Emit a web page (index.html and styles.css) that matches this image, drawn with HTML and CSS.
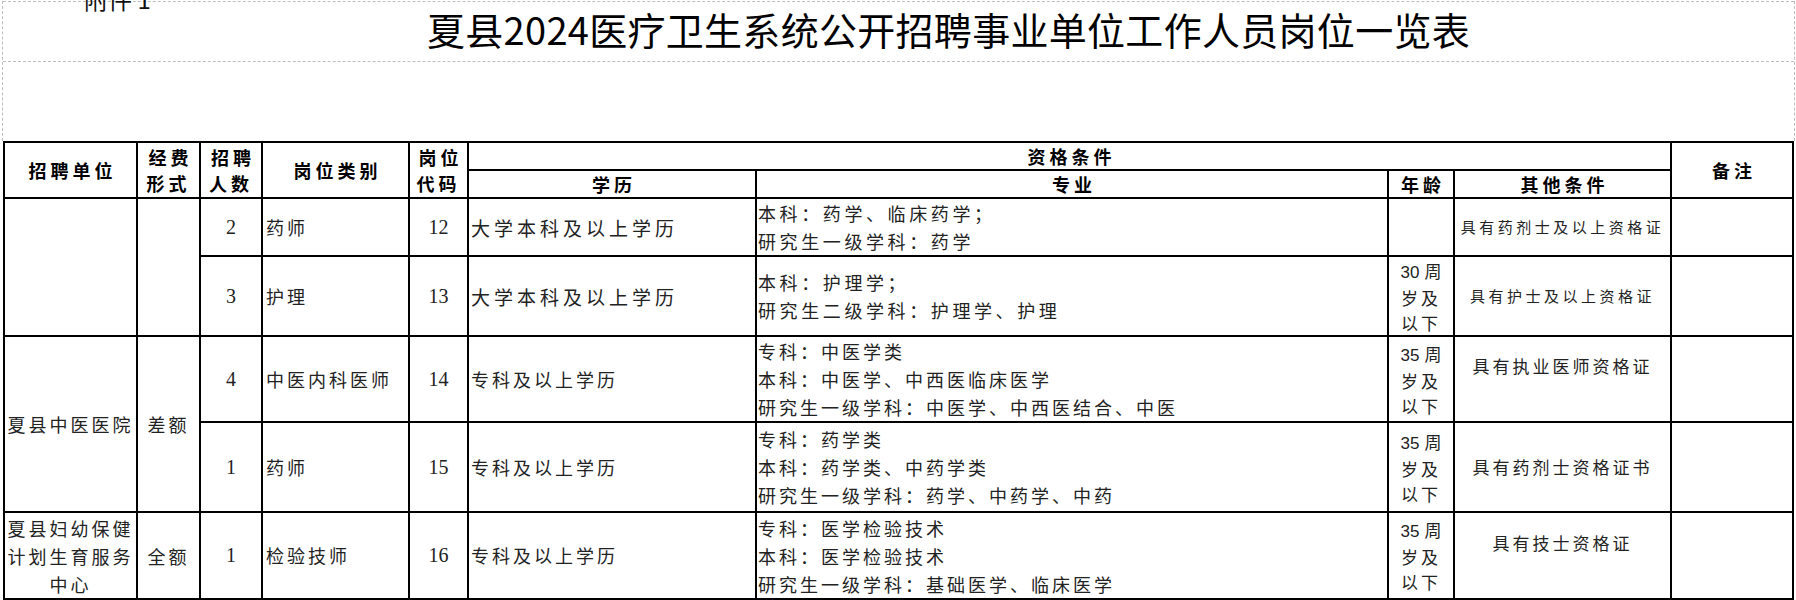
FILE: index.html
```html
<!DOCTYPE html>
<html lang="zh-CN">
<head>
<meta charset="utf-8">
<title>夏县2024医疗卫生系统公开招聘事业单位工作人员岗位一览表</title>
<link rel="stylesheet" href="styles.css">
</head>
<body>
<div class="sheet-head">
  <div class="title-row">
    <div class="annex">附件 1</div>
    <h1 class="title">夏县2024医疗卫生系统公开招聘事业单位工作人员岗位一览表</h1>
  </div>
  <div class="blank-row"></div>
</div>
<table class="jobs">
  <colgroup>
    <col class="c-unit"><col class="c-fund"><col class="c-num"><col class="c-post"><col class="c-code">
    <col class="c-edu"><col class="c-major"><col class="c-age"><col class="c-other"><col class="c-note">
  </colgroup>
  <thead>
    <tr class="h1">
      <th rowspan="2">招聘单位</th>
      <th rowspan="2" class="two">经费<br>形式</th>
      <th rowspan="2" class="two">招聘<br>人数</th>
      <th rowspan="2">岗位类别</th>
      <th rowspan="2" class="two">岗位<br>代码</th>
      <th colspan="4">资格条件</th>
      <th rowspan="2">备注</th>
    </tr>
    <tr class="h2">
      <th>学历</th>
      <th>专业</th>
      <th>年龄</th>
      <th>其他条件</th>
    </tr>
  </thead>
  <tbody>
    <tr class="r1">
      <td rowspan="2" class="unit"></td>
      <td rowspan="2" class="fund"></td>
      <td class="num">2</td>
      <td class="post">药师</td>
      <td class="num">12</td>
      <td class="edu wide">大学本科及以上学历</td>
      <td class="major loose">本科：药学、临床药学；<br>研究生一级学科：药学</td>
      <td class="age"></td>
      <td class="other small">具有药剂士及以上资格证</td>
      <td></td>
    </tr>
    <tr class="r2">
      <td class="num">3</td>
      <td class="post">护理</td>
      <td class="num">13</td>
      <td class="edu wide">大学本科及以上学历</td>
      <td class="major loose">本科：护理学；<br>研究生二级学科：护理学、护理</td>
      <td class="age"><span class="d">30</span>周<br>岁及<br>以下</td>
      <td class="other small">具有护士及以上资格证</td>
      <td></td>
    </tr>
    <tr class="r3">
      <td rowspan="2" class="unit">夏县中医医院</td>
      <td rowspan="2" class="fund">差额</td>
      <td class="num">4</td>
      <td class="post">中医内科医师</td>
      <td class="num">14</td>
      <td class="edu">专科及以上学历</td>
      <td class="major">专科：中医学类<br>本科：中医学、中西医临床医学<br>研究生一级学科：中医学、中西医结合、中医</td>
      <td class="age"><span class="d">35</span>周<br>岁及<br>以下</td>
      <td class="other">具有执业医师资格证<br>&nbsp;</td>
      <td></td>
    </tr>
    <tr class="r4">
      <td class="num">1</td>
      <td class="post">药师</td>
      <td class="num">15</td>
      <td class="edu">专科及以上学历</td>
      <td class="major">专科：药学类<br>本科：药学类、中药学类<br>研究生一级学科：药学、中药学、中药</td>
      <td class="age"><span class="d">35</span>周<br>岁及<br>以下</td>
      <td class="other">具有药剂士资格证书</td>
      <td></td>
    </tr>
    <tr class="r5">
      <td class="unit">夏县妇幼保健<br>计划生育服务<br>中心</td>
      <td class="fund">全额</td>
      <td class="num">1</td>
      <td class="post">检验技师</td>
      <td class="num">16</td>
      <td class="edu">专科及以上学历</td>
      <td class="major">专科：医学检验技术<br>本科：医学检验技术<br>研究生一级学科：基础医学、临床医学</td>
      <td class="age"><span class="d">35</span>周<br>岁及<br>以下</td>
      <td class="other">具有技士资格证<br>&nbsp;</td>
      <td></td>
    </tr>
  </tbody>
</table>
</body>
</html>
```
FILE: styles.css
```css
html, body {
  margin: 0;
  padding: 0;
  background: #ffffff;
}

body {
  width: 1796px;
  height: 600px;
  overflow: hidden;
  font-family: "Noto Sans CJK SC", "Noto Sans", sans-serif;
  color: #000;
}

.sheet-head {
  margin: 1px 1px 0 2px;
  border-left: 1px dashed #bdbdbd;
  border-right: 1px dashed #bdbdbd;
}

.title-row {
  display: grid;
  box-sizing: border-box;
  height: 61px;
  border-top: 1px dashed #bdbdbd;
  border-bottom: 1px dashed #bdbdbd;
}

.annex {
  grid-area: 1 / 1;
  justify-self: start;
  align-self: start;
  margin: -15px 0 0 81px;
  font-size: 24px;
  line-height: 24px;
  color: #111;
}

.title {
  grid-area: 1 / 1;
  justify-self: start;
  align-self: center;
  margin: -5px 0 0 424px;
  font-size: 38px;
  line-height: 40px;
  font-weight: 400;
  letter-spacing: 0.3px;
  color: #000;
}

.blank-row {
  height: 79px;
}

.jobs {
  margin-left: 3px;
  width: 1791px;
  table-layout: fixed;
  border-collapse: collapse;
}

.c-unit { width: 133px; }
.c-fund { width: 63px; }
.c-num { width: 62px; }
.c-post { width: 147px; }
.c-code { width: 59px; }
.c-edu { width: 288px; }
.c-major { width: 632px; }
.c-age { width: 66px; }
.c-other { width: 217px; }
.c-note { width: 122px; }

.jobs th,
.jobs td {
  border: 2px solid #000;
  padding: 0;
  overflow: hidden;
  white-space: nowrap;
}

.jobs th {
  font-size: 18px;
  line-height: 26px;
  font-weight: 700;
  letter-spacing: 4px;
  text-indent: 4px;
  text-align: center;
  vertical-align: middle;
}

.h1 { height: 28px; }
.h2 { height: 28px; }
.r1 { height: 57px; }
.r2 { height: 80px; }
.r3 { height: 85px; }
.r4 { height: 90px; }
.r5 { height: 87px; }

.jobs td {
  font-size: 18px;
  line-height: 27px;
  letter-spacing: 3px;
  vertical-align: middle;
  color: #222;
}

.jobs td.unit,
.jobs td.fund {
  text-align: center;
  line-height: 28px;
}

.jobs td.num {
  font-family: "Liberation Serif", serif;
  font-size: 20px;
  letter-spacing: 0;
  text-align: center;
}

.jobs td.post {
  padding-left: 3px;
}

.jobs td.edu {
  padding-left: 2px;
}

.jobs td.edu.wide {
  font-size: 19px;
  letter-spacing: 4px;
}

.jobs td.major {
  padding-left: 1px;
  line-height: 28px;
}

.jobs td.major.loose {
  letter-spacing: 3.6px;
}

.jobs td.age {
  text-align: center;
  font-size: 17px;
  line-height: 25px;
  letter-spacing: 3px;
  text-indent: 3px;
}

.jobs td.age .d {
  font-family: "Liberation Sans", sans-serif;
  letter-spacing: 0;
  margin-right: 5px;
}

.jobs td.other {
  text-align: center;
  font-size: 17px;
  letter-spacing: 3px;
  line-height: 26px;
}

.jobs td.other.small {
  font-size: 15px;
  letter-spacing: 3.5px;
}
```
